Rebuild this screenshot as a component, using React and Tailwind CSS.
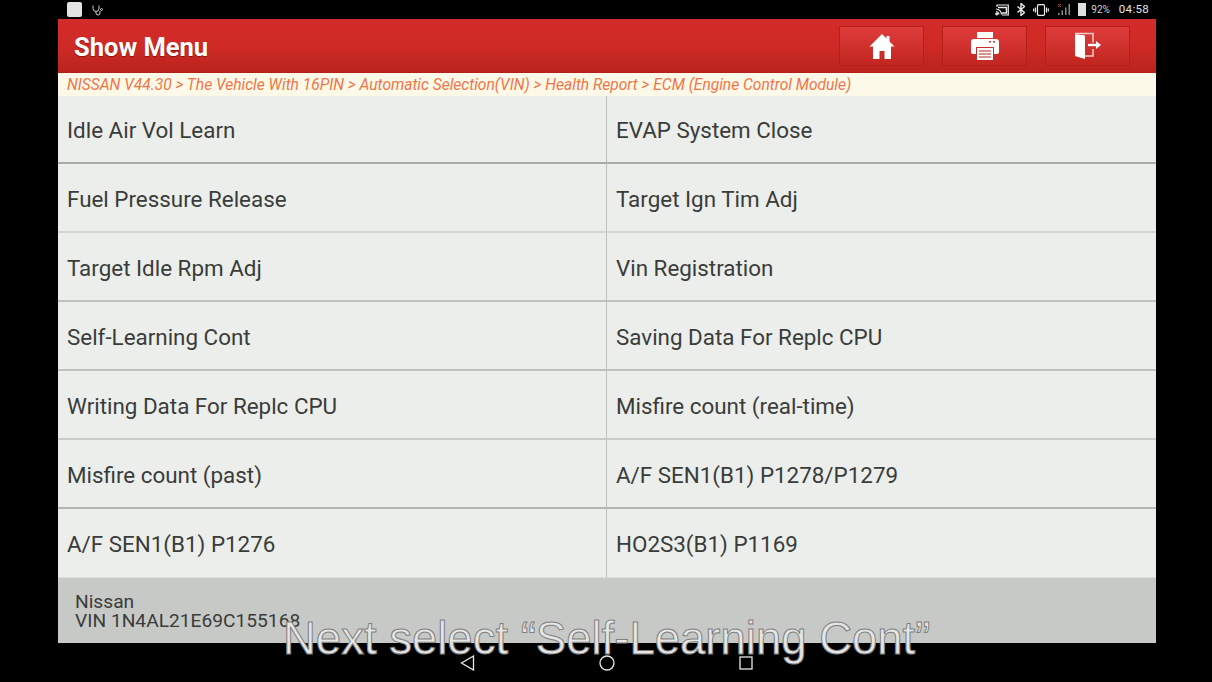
import React from 'react';

const rows = [
  { items: ['Idle Air Vol Learn', 'EVAP System Close'], size: 'h-[68px] pt-[2px]', line: 'border-b-2 border-b-[#a9aba8]' },
  { items: ['Fuel Pressure Release', 'Target Ign Tim Adj'], size: 'h-[69px] pt-[4px]', line: 'border-b-2 border-b-[#d3d5d2]' },
  { items: ['Target Idle Rpm Adj', 'Vin Registration'], size: 'h-[69px] pt-[4px]', line: 'border-b-2 border-b-[#bfc1be]' },
  { items: ['Self-Learning Cont', 'Saving Data For Replc CPU'], size: 'h-[69px] pt-[4px]', line: 'border-b-2 border-b-[#bfc1be]' },
  { items: ['Writing Data For Replc CPU', 'Misfire count (real-time)'], size: 'h-[69px] pt-[4px]', line: 'border-b-2 border-b-[#c9cbc8]' },
  { items: ['Misfire count (past)', 'A/F SEN1(B1) P1278/P1279'], size: 'h-[69px] pt-[4px]', line: 'border-b-2 border-b-[#b3b5b2]' },
  { items: ['A/F SEN1(B1) P1276', 'HO2S3(B1) P1169'], size: 'h-[69px] pt-[3px]', line: 'border-b border-b-[#dcdedb]' },
];

const StatusBar = () => (
  <div className="flex h-[19px] items-center bg-black pl-[67px] pr-[63px] text-[#d8d8d8]">
    <div className="h-[15px] w-[15px] rounded-[2px] bg-[#e4e4e4]" />
    <svg className="ml-[10px]" width="12" height="12" viewBox="0 0 12 12" fill="none" stroke="#cfcfcf" strokeWidth="1">
      <path d="M1 1.500v3a3 3 0 0 0 6 0v-3M4 7.500v1.500a2 2 0 0 0 4 0V7" />
      <circle cx="9.500" cy="5.500" r="1" />
    </svg>
    <div className="ml-auto flex items-center">
      <svg width="14" height="12" viewBox="0 0 14 12" fill="none" stroke="#ececec" strokeWidth="1.200">
        <path d="M2 3V1h11.300v10H7" />
        <path d="M1 5a6 6 0 0 1 5.500 5.500M1 7.500a3.500 3.500 0 0 1 3 3" />
        <circle cx="1.600" cy="10" r="0.800" fill="#ececec" />
        <path d="M3 3.500h8.500v5.500H7" strokeWidth="1.500" />
      </svg>
      <svg className="ml-[8px]" width="8" height="13" viewBox="0 0 8 13" fill="none" stroke="#ececec" strokeWidth="1.400">
        <path d="M0.500 3.500l7 6L4 12.500V0.500l3.500 3-7 6" />
      </svg>
      <svg className="ml-[8px]" width="16" height="12" viewBox="0 0 16 12" fill="none" stroke="#ececec" strokeWidth="1.200">
        <rect x="4.500" y="0.700" width="7" height="10.600" rx="1" />
        <path d="M2.500 3.500v5M0.700 4.500v3M13.500 3.500v5M15.300 4.500v3" />
      </svg>
      <svg className="ml-[8px]" width="14" height="13" viewBox="0 0 14 13">
        <path d="M1 10h1.500v2H1zM4.500 7.500H6V12H4.500zM8 4.500h1.500V12H8zM11.500 1H13v11h-1.500z" fill="#8a8a8a" />
        <path d="M1 1l3 3M4 1L1 4" stroke="#b04030" strokeWidth="1" />
      </svg>
      <div className="ml-[7px] mr-[5px] h-[13px] w-[8px] bg-[#e0e0e0]" />
      <span className="text-[10px] leading-none text-[#d0d0d0]">92%</span>
      <span className="ml-[9px] text-[11.500px] leading-none tracking-[0.3px] text-[#e6e6e6]">04:58</span>
    </div>
  </div>
);

const HeaderButton = ({ children }) => (
  <button className="flex h-[40px] w-[85px] items-center justify-center border border-[#b32019] bg-gradient-to-b from-[#df3c3c] to-[#c2261f]">
    {children}
  </button>
);

const Header = () => (
  <header className="flex h-[54px] items-center justify-between border-b border-[#b3201a] bg-gradient-to-b from-[#d42c28] via-[#cf2a26] to-[#b9241c] pl-[16px] pr-[26px]">
    <h1 className="pt-[4px] text-[25.500px] font-bold leading-none text-white [text-shadow:0_1px_1px_rgba(90,0,0,0.5)]">Show Menu</h1>
    <div className="flex gap-[18px]">
      <HeaderButton>
        <svg width="26" height="26" viewBox="0 0 26 26" fill="#fff">
          <path d="M13 1L0.500 13.500h3.500V26h6.500v-8h5v8H22V13.500h3.500L20.500 8.500V3h-3v2.500z" />
        </svg>
      </HeaderButton>
      <HeaderButton>
        <svg width="28" height="28" viewBox="0 0 28 28" fill="#fff">
          <path d="M6 0h16v6H6z" />
          <path fillRule="evenodd" d="M3 7h22a3 3 0 0 1 3 3v10a2 2 0 0 1-2 2h-3v-7H5v7H2a2 2 0 0 1-2-2V10a3 3 0 0 1 3-3z" />
          <path d="M6 16h16v12H6z" />
          <path d="M8 19h12M8 22h12M8 25h12" stroke="#d0706a" strokeWidth="1.500" />
          <path d="M18 9h2v1.500h-2zM22 9h2v1.500h-2z" fill="#c83a36" />
        </svg>
      </HeaderButton>
      <HeaderButton>
        <svg width="28" height="28" viewBox="0 0 28 28">
          <path d="M1 2l10 1.500V27L1 24z" fill="#fff" />
          <path d="M1 1.500h18v9M19 17v7h-8" fill="none" stroke="#f3c9c7" strokeWidth="1.600" />
          <path d="M14 13h9" stroke="#fff" strokeWidth="2.400" />
          <path d="M22 9l5 4-5 4z" fill="#fff" />
        </svg>
      </HeaderButton>
    </div>
  </header>
);

export default function App() {
  return (
    <div className="relative h-[682px] w-[1212px] overflow-hidden bg-black font-['Roboto',sans-serif]">
      <StatusBar />

      <main className="mx-[58px] flex w-[1098px] flex-col">
        <Header />

        <div className="flex h-[23px] items-center bg-[#fdf9e8] pl-[9px] pt-[2px] text-[15.560px] italic text-[#f0764a]">
          NISSAN V44.30 &gt; The Vehicle With 16PIN &gt; Automatic Selection(VIN) &gt; Health Report &gt; ECM (Engine Control Module)
        </div>

        <div className="grid grid-cols-2 bg-[#eceeeb]">
          {rows.map((row) =>
            row.items.map((label, j) => (
              <div
                key={label}
                className={`flex items-center pl-[9px] text-[22.400px] leading-none text-[#3a3c3a] ${row.size} ${row.line} ${j === 0 ? 'border-r border-r-[#bdbfbc]' : ''}`}
              >
                {label}
              </div>
            ))
          )}
        </div>

        <div className="flex h-[65px] flex-col bg-[#c7c9c6] pl-[17px] pt-[14px] text-[19.200px] leading-[19px] text-[#3a3c3a]">
          <span>Nissan</span>
          <span>VIN 1N4AL21E69C155168</span>
        </div>
      </main>

      {/* navigation bar */}
      <div className="mt-[12px] flex items-center justify-center gap-[124px]">
        <svg width="15" height="16" viewBox="0 0 15 16" fill="none" stroke="#e8e8e8" strokeWidth="1.300">
          <path d="M13.500 1L1.500 8l12 7z" />
        </svg>
        <svg width="16" height="16" viewBox="0 0 16 16" fill="none" stroke="#e8e8e8" strokeWidth="1.300">
          <circle cx="8" cy="8" r="7" />
        </svg>
        <svg width="14" height="14" viewBox="0 0 14 14" fill="none" stroke="#e8e8e8" strokeWidth="1.300">
          <rect x="1" y="1" width="12" height="12" />
        </svg>
      </div>

      {/* video caption */}
      <div className="absolute left-[283px] top-[614px] whitespace-nowrap font-['Liberation_Sans',sans-serif] text-[45.500px] leading-[50px] text-[#e6e6e6] [-webkit-text-stroke:1px_#808080]">
        Next select “Self-Learning Cont”
      </div>
    </div>
  );
}
